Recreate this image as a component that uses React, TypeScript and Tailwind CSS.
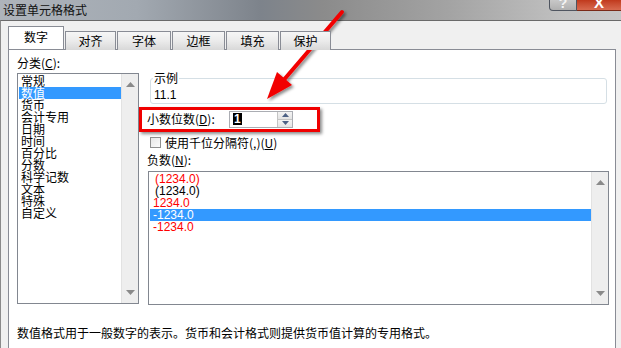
import React from "react";

const cats = ["常规", "数值", "货币", "会计专用", "日期", "时间", "百分比", "分数", "科学记数", "文本", "特殊", "自定义"];
const negs: { t: string; c: string; sel?: boolean; pl: string }[] = [
  { t: "(1234.0)", c: "text-[#ff0000]", pl: "pl-[5px]" },
  { t: "(1234.0)", c: "text-black", pl: "pl-[5px]" },
  { t: "1234.0", c: "text-[#ff0000]", pl: "pl-[3px]" },
  { t: "-1234.0", c: "text-white", sel: true, pl: "pl-[3px]" },
  { t: "-1234.0", c: "text-[#ff0000]", pl: "pl-[3px]" },
];

function ScrollBar() {
  return (
    <div className="w-[17px] h-full bg-[#eeeeee] border-l border-[#e2e2e2] flex flex-col items-center justify-between py-[8px]">
      <svg width="9" height="5" viewBox="0 0 9 5">
        <polygon points="4.5,0 9,5 0,5" fill="#8a8a8a" />
      </svg>
      <svg width="9" height="5" viewBox="0 0 9 5">
        <polygon points="0,0 9,0 4.5,5" fill="#8a8a8a" />
      </svg>
    </div>
  );
}

const tabs = ["对齐", "字体", "边框", "填充", "保护"];
const tabW = ["w-[51px]", "w-[54px]", "w-[53px]", "w-[53px]", "w-[51px]"];

export default function App() {
  return (
    <div className="relative w-[621px] h-[348px] overflow-hidden flex flex-col font-['Noto_Sans_CJK_SC','Liberation_Sans',sans-serif] text-[12px] text-black">
      {/* title bar */}
      <div className="h-[20px] shrink-0 flex items-start justify-between bg-[linear-gradient(90deg,#aeb4bb_0%,#a2a9b1_22%,#7d838b_42%,#8b8b8b_52%,#a3a3a3_72%,#bfbfbf_90%,#c6c6c6_100%)]">
        <div className="pl-[3px] pt-[2px] leading-[15px] text-[12px] text-[#111]">设置单元格格式</div>
        <div className="flex h-[11px]">
          <div className="w-[28px] h-[11px] overflow-hidden rounded-bl-[4px] border border-t-0 border-[#4f5560] bg-gradient-to-b from-[#c8c8c8] to-[#b0b0b0] flex justify-center">
            <span className="text-[14px] leading-[6px] font-bold text-[#f4f4f4] font-['Liberation_Sans',sans-serif]">?</span>
          </div>
          <div className="w-[44px] h-[11px] overflow-hidden border-b border-[#7a2a18] bg-gradient-to-b from-[#c0391c] to-[#d86a4f] flex justify-center">
            <span className="text-[15px] leading-[6px] font-bold text-white font-['Liberation_Sans',sans-serif]">X</span>
          </div>
        </div>
      </div>

      {/* dialog body */}
      <div className="flex-1 flex flex-col bg-[#f0f0f0] border-t border-t-[#6a6a6a] border-l border-l-[#8a8a8a] pl-[7px] pt-[6px] pr-[5px]">
        {/* tabs */}
        <div className="h-[22px] flex items-end shrink-0 relative z-10">
          <div className="w-[56px] h-[23px] bg-white border border-b-0 border-[#898c95] flex items-center justify-center pb-[2px]">数字</div>
          {tabs.map((t, i) => (
            <div
              key={t}
              className={`${tabW[i]} h-[19px] ml-[1px] mb-[-1px] border border-b-0 border-[#898c95] bg-gradient-to-b from-[#f6f6f6] via-[#ebebeb] to-[#d8d8d8] flex items-center justify-center`}
            >
              {t}
            </div>
          ))}
        </div>

        {/* panel */}
        <div className="w-[608px] h-[320px] shrink-0 bg-white border border-[#898c95] pl-[8px] pt-[7px] flex flex-col">
          <div className="flex">
            {/* left column */}
            <div className="w-[122px] flex flex-col">
              <div className="h-[16px] leading-[12px]">
                分类(<span className="underline">C</span>):
              </div>
              <div className="h-[231px] border border-[#828790] bg-white flex">
                <div className="flex-1 pt-[1px] pl-[1px]">
                  {cats.map((c, i) => (
                    <div
                      key={c}
                      className={`h-[12px] leading-[12px] pl-[2px] ${i === 1 ? "bg-[#3399ff] text-white" : ""}`}
                    >
                      {c}
                    </div>
                  ))}
                </div>
                <ScrollBar />
              </div>
            </div>

            {/* right column */}
            <div className="w-[462px] ml-[8px] pt-[15px] flex flex-col">
              <fieldset className="ml-[3px] w-[457px] border border-[#d5dfe5] rounded-[3px] px-[2px] pb-[2px]">
                <legend className="leading-[12px] px-[1px]">示例</legend>
                <div className="pt-[5px] leading-[12px] pl-[1px] font-['Liberation_Sans',sans-serif] text-[12px]">11.1</div>
              </fieldset>

              <div className="mt-[6px] h-[18px] flex items-center">
                <div className="w-[82px] leading-[12px]">
                  小数位数(<span className="underline">D</span>):
                </div>
                <div className="w-[64px] h-[17px] border border-[#abadb3] bg-white flex items-center">
                  <div className="flex-1 pl-[3px] flex items-center">
                    <span className="bg-black text-white font-['Liberation_Sans',sans-serif] font-bold text-[12px] leading-[12px] px-[1px]">1</span>
                  </div>
                  <div className="w-[15px] h-full flex flex-col border-l border-[#c4c4c4]">
                    <div className="flex-1 bg-gradient-to-b from-[#f4f4f4] to-[#e4e4e4] flex items-center justify-center border-b border-[#c4c4c4]">
                      <svg width="7" height="4" viewBox="0 0 7 4"><polygon points="3.5,0 7,4 0,4" fill="#4d6185" /></svg>
                    </div>
                    <div className="flex-1 bg-gradient-to-b from-[#f4f4f4] to-[#e4e4e4] flex items-center justify-center">
                      <svg width="7" height="4" viewBox="0 0 7 4"><polygon points="0,0 7,0 3.5,4" fill="#4d6185" /></svg>
                    </div>
                  </div>
                </div>
              </div>

              <div className="mt-[8px] h-[13px] flex items-center">
                <div className="ml-[3px] w-[11px] h-[11px] border border-[#8f8f8f] bg-gradient-to-br from-[#e6e6e6] to-[#fbfbfb]" />
                <div className="ml-[4px] leading-[12px]">
                  使用千位分隔符(,)(<span className="underline">U</span>)
                </div>
              </div>

              <div className="mt-[5px] h-[17px] leading-[12px]">
                负数(<span className="underline">N</span>):
              </div>
              <div className="ml-[1px] w-[461px] h-[134px] border border-[#828790] bg-white flex">
                <div className="flex-1 pt-[1px] pl-[1px] font-['Liberation_Sans',sans-serif]">
                  {negs.map((n, i) => (
                    <div
                      key={i}
                      className={`h-[12px] leading-[12px] ${n.pl} ${n.c} ${n.sel ? "bg-[#3399ff]" : ""}`}
                    >
                      {n.t}
                    </div>
                  ))}
                </div>
                <ScrollBar />
              </div>
            </div>
          </div>

          <div className="mt-[22px] leading-[12px]">
            数值格式用于一般数字的表示。货币和会计格式则提供货币值计算的专用格式。
          </div>
        </div>
      </div>

      {/* annotation: red rectangle */}
      <div className="absolute left-[139px] top-[107px] w-[181px] h-[25px] border-[3px] border-[#f00000] shadow-[2px_2px_3px_rgba(0,0,0,0.45)]" />

      {/* annotation: arrow */}
      <svg className="absolute left-0 top-0 pointer-events-none" width="621" height="348" viewBox="0 0 621 348">
        <defs>
          <filter id="sh" x="-20%" y="-20%" width="140%" height="140%">
            <feDropShadow dx="2" dy="2" stdDeviation="1.5" floodColor="#000" floodOpacity="0.45" />
          </filter>
        </defs>
        <g filter="url(#sh)">
          <line x1="342" y1="12" x2="282" y2="82" stroke="#f20000" strokeWidth="4" strokeLinecap="round" />
          <polygon points="267,99 277,72 292,85" fill="#f20000" />
        </g>
      </svg>
    </div>
  );
}
